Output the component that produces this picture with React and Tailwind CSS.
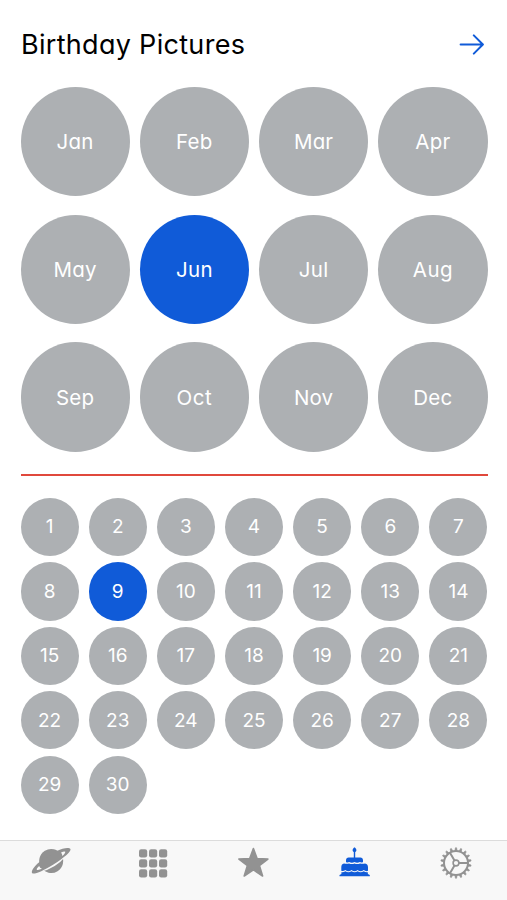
import React from "react";

const MONTHS = [
  ["Jan", "tracking-[0.3px]"], ["Feb", "tracking-[0.3px]"], ["Mar", "tracking-[0.1px]"], ["Apr", "tracking-[0.3px]"],
  ["May", "tracking-[0.2px]"], ["Jun", "tracking-[0.3px]"], ["Jul", "tracking-[0.3px]"], ["Aug", "tracking-[0.4px]"],
  ["Sep", "tracking-[0.2px]"], ["Oct", "tracking-[0.6px]"], ["Nov", "tracking-[0.1px]"], ["Dec", "tracking-[0.3px]"],
];
const DAYS = Array.from({ length: 30 }, (_, i) => i + 1);
const TEETH = Array.from({ length: 18 }, (_, i) => i * 20);

function Planet() {
  return (
    <svg width="48" height="40" viewBox="0 0 48 40">
      <g transform="translate(24.2 19) rotate(-32)">
        <circle r="12" fill="#929292" />
        <path d="M-15 2.2Q0 7.4 15 2.2" fill="none" stroke="#f8f8f8" strokeWidth="2.6" />
        <path d="M-10 -5.4C-17 -4.8 -22.6 -2.2 -22.6 .1C-22.6 2.5 -13 4.2 0 4.2S22.6 2.5 22.6 .1C22.6 -2.2 17 -4.8 10 -5.4Z" fill="#929292" />
        <path d="M-12.9 -2.1Q-16.8 -1.4 -16.8 -.3Q-16.2 1.1 -12 1.7Q-13.3 -.1 -12.9 -2.1ZM12.9 -2.1Q16.8 -1.4 16.8 -.3Q16.2 1.1 12 1.7Q13.3 -.1 12.9 -2.1Z" fill="#f8f8f8" />
      </g>
    </svg>
  );
}

function GridIcon() {
  return (
    <svg width="30" height="30" viewBox="0 0 30 30" fill="#929292">
      {[1, 11, 21].map((y) => [1, 11, 21].map((x) => (
        <rect key={`${x}-${y}`} x={x} y={y - 0.8} width="8.2" height="8.2" rx="2.2" />
      )))}
    </svg>
  );
}

function Star() {
  return (
    <svg width="32" height="32" viewBox="0 0 32 32" fill="#929292" stroke="#929292" strokeWidth="1.6" strokeLinejoin="round">
      <path d="M16.4 1.6L20.1 11.6L30.9 12L22.4 18.6L25.6 29L16.4 22.8L7.2 29L10.4 18.6L1.9 12L12.7 11.6Z" />
    </svg>
  );
}

function Cake() {
  return (
    <svg width="32" height="32" viewBox="0 0 32 32" fill="#105bd8">
      <path d="M15.5 .3C16.8 1.5 17.4 2.3 17.4 3.3C17.4 4.4 16.6 5.1 15.5 5.1S13.6 4.4 13.6 3.3C13.6 2.3 14.2 1.5 15.5 .3Z" />
      <path d="M14.8 4.6h1.4v6.1h-1.4zM9.7 10.4h11.6c1.8 0 2.7 1.1 2.7 2.8v1.8c-1 .7-2.1.6-3.2.1-1.8.7-3.6.7-5.3 0-1.7.7-3.5.7-5.3 0-1.1.5-2.2.6-3.2-.1v-1.8c0-1.7.9-2.8 2.7-2.8z" />
      <path d="M5.1 16.4c1.4.6 3.2.6 5 0 1.8.8 3.7.8 5.4 0 1.8.8 3.7.8 5.5 0 1.8.6 3.7.6 5 0 2.2.4 3 1.8 3 4.1v3.3c-1.5.7-3 .3-4.3-.8-2.1 1.6-4.2 1.6-6.1 0-2 1.6-4 1.6-6.1 0-2 1.6-4.1 1.6-6.1 0-1.3 1-2.6 1.4-4.1.8v-3.3c0-2.3.7-3.7 2.7-4.1z" />
      <path d="M2.4 25.2c1.5.2 2.8-.1 4-.9 2 1.4 4.1 1.4 6.1 0 2.1 1.4 4.1 1.4 6.1 0 1.9 1.4 4 1.4 6.1 0 1.3.9 2.7 1.1 4.1.9l.1 1.7 1.9 1v1.4H.5v-1.4l1.9-1z" />
    </svg>
  );
}

function Gear() {
  return (
    <svg width="32" height="32" viewBox="-16 -16 32 32" fill="none" stroke="#929292">
      <circle r="12" strokeWidth="2" />
      <circle r="2.9" strokeWidth="1.6" />
      <path d="M3 0H12M-1.5 -2.6L-6.2 -10.6M-1.5 2.6L-6.2 10.6" strokeWidth="2" />
      {TEETH.map((a) => (
        <path key={a} d="M-1.1 -12.5L-.6 -15.2H.6L1.1 -12.5Z" transform={`rotate(${a})`} fill="#929292" strokeWidth=".6" />
      ))}
    </svg>
  );
}

export default function App() {
  return (
    <div className="flex h-[900px] w-[507px] flex-col overflow-hidden bg-white font-['Inter','Open_Sans',sans-serif] [font-feature-settings:'cv11'_1]">
      <header className="flex h-[87px] shrink-0 items-center justify-between pr-[22px] pl-5">
        <h1 className="pt-[2px] pl-px text-[27px] leading-[40px] tracking-[0.3px] text-black">Birthday Pictures</h1>
        <svg width="26" height="22" viewBox="0 0 26 22" fill="none" stroke="#105bd8" strokeWidth="2" strokeLinecap="round" strokeLinejoin="round">
          <path d="M1.6 11.5H23.7M14.8 2.4L23.9 11.5L14.8 20.6" />
        </svg>
      </header>

      <main className="flex min-h-0 flex-1 flex-col pr-[19.5px] pl-[20.5px]">
        <div className="grid grid-cols-4 gap-x-[10px] gap-y-[18.4px]">
          {MONTHS.map(([m, tracking]) => (
            <button key={m} className={`flex aspect-square items-center justify-center rounded-full pt-[2px] text-[20.5px] font-normal text-white ${tracking} ${m === "Jun" ? "bg-[#105bd8]" : "bg-[#adb0b3]"}`}>
              {m}
            </button>
          ))}
        </div>
        <div className="mt-[22px] h-[2px] shrink-0 bg-[#e0483c]" />
        <div className="mt-[22.4px] grid grid-cols-7 gap-x-[10px] gap-y-[6.3px]">
          {DAYS.map((d) => (
            <button key={d} className={`flex aspect-square items-center justify-center rounded-full pt-px text-[19px] font-normal text-white ${d === 9 ? "bg-[#105bd8]" : "bg-[#adb0b3]"}`}>
              {d}
            </button>
          ))}
        </div>
      </main>

      <nav className="grid h-[60px] shrink-0 grid-cols-5 items-start justify-items-center border-t border-[#dcdcdc] bg-[#f8f8f8]">
        <div className="pt-px"><Planet /></div>
        <div className="pt-[8px] pl-[2px]"><GridIcon /></div>
        <div className="pt-[6px]"><Star /></div>
        <div className="pt-[6px]"><Cake /></div>
        <div className="pt-[6px]"><Gear /></div>
      </nav>
    </div>
  );
}
